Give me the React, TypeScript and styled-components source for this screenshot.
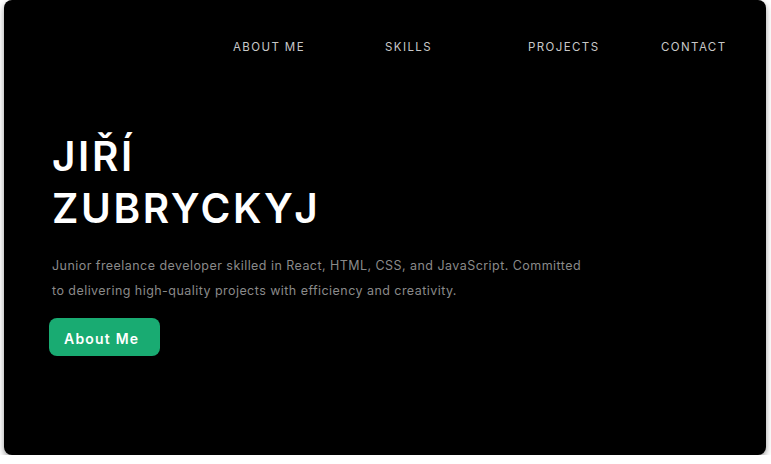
import React from "react";
import styled, { createGlobalStyle } from "styled-components";

const Global = createGlobalStyle`
  html, body { margin: 0; padding: 0; background: #ffffff; }
  body { font-family: "Inter", "Open Sans", sans-serif; }
  * { box-sizing: border-box; }
`;

const Page = styled.div`
  padding: 0 5px 0 4px;
`;

const Card = styled.main`
  background: #000;
  height: 455px;
  border-radius: 8px;
  box-shadow: 0 3px 6px rgba(0, 0, 0, 0.4);
  display: flex;
  flex-direction: column;
  overflow: hidden;
`;

const Nav = styled.nav`
  display: grid;
  grid-template-columns: 152px 143px 133px auto;
  padding: 40px 0 0 229px;
`;

const NavLink = styled.a`
  font-family: "Inter", sans-serif;
  font-size: 11.5px;
  font-weight: 400;
  letter-spacing: 1.4px;
  color: #c8c8c8;
  text-decoration: none;
  line-height: 14px;
`;

const Hero = styled.section`
  padding: 77px 0 0 48px;
  display: flex;
  flex-direction: column;
  align-items: flex-start;
`;

const Title = styled.h1`
  margin: 0;
  font-family: "Inter", sans-serif;
  font-weight: 600;
  font-size: 40.5px;
  line-height: 52px;
  color: #fff;
  letter-spacing: 2.6px;
`;

const Lead = styled.p`
  margin: 18px 0 0 0;
  width: 535px;
  font-family: "Inter", sans-serif;
  font-size: 12.5px;
  line-height: 25px;
  color: #8a8a8a;
  letter-spacing: 0.45px;
`;

const Button = styled.button`
  margin: 15px 0 0 -3px;
  width: 111px;
  height: 38px;
  padding: 3px 0 0 15px;
  text-align: left;
  border: none;
  border-radius: 8px;
  background: #19ab72;
  color: #fff;
  font-family: "Inter", sans-serif;
  font-weight: 600;
  font-size: 14px;
  letter-spacing: 1.2px;
  cursor: pointer;
`;

export default function App() {
  return (
    <>
      <Global />
      <Page>
        <Card>
          <Nav>
            <NavLink href="#about">ABOUT ME</NavLink>
            <NavLink href="#skills">SKILLS</NavLink>
            <NavLink href="#projects">PROJECTS</NavLink>
            <NavLink href="#contact">CONTACT</NavLink>
          </Nav>
          <Hero>
            <Title>
              JIŘÍ
              <br />
              ZUBRYCKYJ
            </Title>
            <Lead>
              Junior freelance developer skilled in React, HTML, CSS, and JavaScript. Committed to
              delivering high-quality projects with efficiency and creativity.
            </Lead>
            <Button>About Me</Button>
          </Hero>
        </Card>
      </Page>
    </>
  );
}
